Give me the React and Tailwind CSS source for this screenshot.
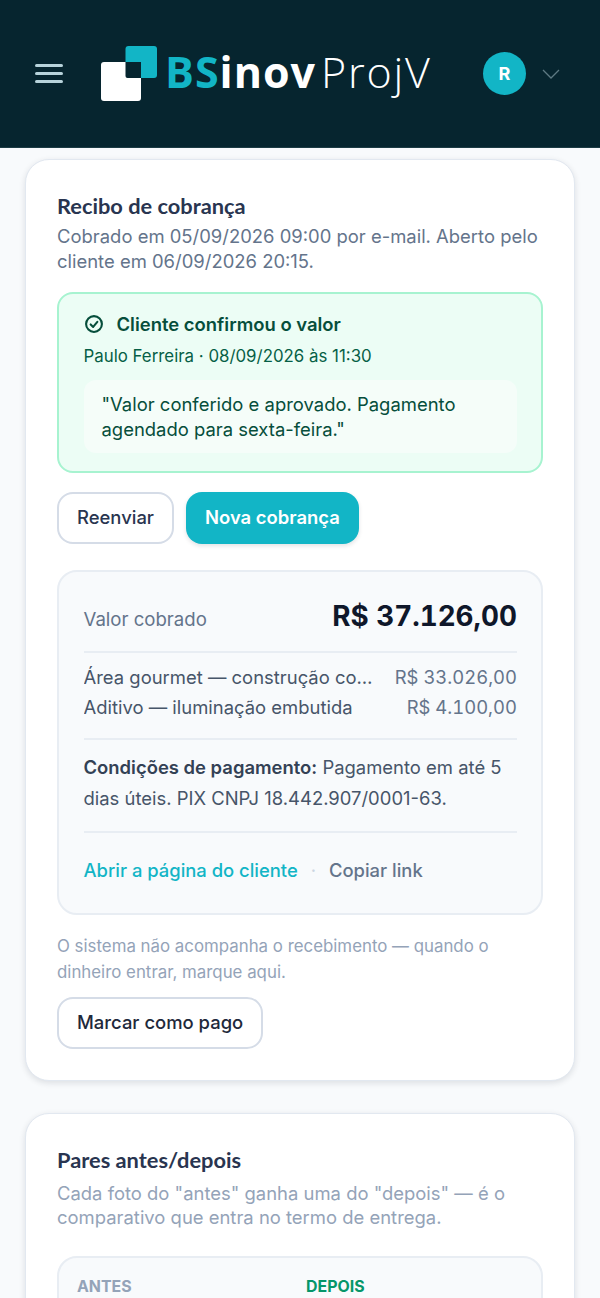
import React from "react";

const Inter = "font-['Inter',sans-serif]";

function Logo() {
  return (
    <div className="flex items-center">
      <svg width="56" height="55" viewBox="0 0 56 55" className="shrink-0">
        <rect x="24.5" y="0" width="31.5" height="32" rx="3" fill="#12b5c6" />
        <rect x="0" y="16" width="40" height="39" rx="3" fill="#ffffff" />
        <path d="M24.5 16 H40 V32 H26.5 a2 2 0 0 1 -2 -2 Z" fill="#06252f" />
      </svg>
      <div className="ml-[8px] -mt-[4px] flex items-baseline font-['Open_Sans',sans-serif] text-[43px] leading-none whitespace-nowrap">
        <span className="font-bold tracking-[1px] text-[#12b5c6]">BS</span>
        <span className="font-bold tracking-[1px] text-white">inov</span>
        <span className="ml-[5px] font-light tracking-[1.8px] text-white">ProjV</span>
      </div>
    </div>
  );
}

function Header() {
  return (
    <header className="flex h-[148px] items-center border-b border-[#1c3c45] bg-[#06252f] pl-[35px] pr-[40px]">
      <div className="flex w-[28px] flex-col gap-[5.5px]">
        <span className="h-[2.5px] w-full rounded-full bg-[#b7d3db]" />
        <span className="h-[2.5px] w-full rounded-full bg-[#b7d3db]" />
        <span className="h-[2.5px] w-full rounded-full bg-[#b7d3db]" />
      </div>
      <div className="ml-[38px]">
        <Logo />
      </div>
      <div className="ml-auto flex items-center gap-[16px]">
        <div className="flex h-[43px] w-[43px] items-center justify-center rounded-full bg-[#12b5c6] text-[18px] font-bold text-white">
          R
        </div>
        <svg width="18" height="10" viewBox="0 0 18 10" fill="none" stroke="#5d7a83" strokeWidth="1.3">
          <path d="M1 1 L9 9 L17 1" />
        </svg>
      </div>
    </header>
  );
}

function Card({ children }) {
  return (
    <section className="rounded-[24px] border border-[#e2e8f0] bg-white p-[31px] shadow-[0_2px_6px_rgba(15,23,42,0.12)]">
      {children}
    </section>
  );
}

export default function App() {
  return (
    <div className={`h-[1298px] overflow-hidden bg-[#f8fafc] ${Inter}`}>
      <Header />
      <main className="flex flex-col gap-[32px] px-[25px] pt-[11px]">
        <Card>
          <h2 className="font-['Lato',sans-serif] text-[21.8px] font-bold leading-[30px] text-[#293550]">Recibo de cobrança</h2>
          <p className="mt-[3px] text-[18.45px] leading-[24.5px] text-[#64748b]">
            Cobrado em 05/09/2026 09:00 por e-mail. Aberto pelo cliente em 06/09/2026 20:15.
          </p>

          <div className="mt-[19px] rounded-[16px] border-2 border-[#a7f3d0] bg-[#ecfdf5] px-[24.5px] pb-[18px] pt-[18px]">
            <div className="flex items-center gap-[13px]">
              <svg width="20" height="20" viewBox="0 0 24 24" fill="none" stroke="#064e3b" strokeWidth="2.5" strokeLinecap="round" strokeLinejoin="round">
                <circle cx="12" cy="12" r="9.5" />
                <path d="M8 12.5 L11 15.5 L16 9.5" />
              </svg>
              <span className="text-[18.45px] font-semibold leading-[24px] text-[#064e3b]">Cliente confirmou o valor</span>
            </div>
            <div className="mt-[8px] text-[16.85px] leading-[24px] text-[#065f46]">Paulo Ferreira · 08/09/2026 às 11:30</div>
            <div className="mt-[12px] rounded-[12px] bg-[#f5fdf9] px-[18px] py-[12px] text-[18.45px] leading-[24.5px] text-[#064e3b]">
              "Valor conferido e aprovado. Pagamento agendado para sexta-feira."
            </div>
          </div>

          <div className="mt-[19px] flex gap-[12px]">
            <button className="h-[52px] rounded-[16px] border-2 border-[#d5dce7] bg-white px-[18px] text-[18.45px] font-medium text-[#293550]">Reenviar</button>
            <button className="h-[52px] rounded-[16px] bg-[#12b5c6] px-[19px] text-[18.45px] font-semibold text-white shadow-[0_2px_4px_rgba(15,23,42,0.12)]">Nova cobrança</button>
          </div>

          <div className="mt-[26px] rounded-[20px] border-2 border-[#e8edf3] bg-[#f8fafc] pb-[29px] pl-[24.5px] pr-[24px] pt-[24px]">
            <div className="flex items-baseline justify-between border-b-2 border-[#e8edf3] pb-[15px]">
              <span className="text-[18.6px] leading-[27px] text-[#64748b]">Valor cobrado</span>
              <span className="text-[27.8px] font-bold leading-[40px] text-[#0f172a] tabular-nums">R$ 37.126,00</span>
            </div>
            <div className="border-b-2 border-[#e8edf3] pb-[16px] pt-[9px]">
              <div className="flex justify-between gap-[20px] text-[18.45px] leading-[30px]">
                <span className="truncate text-[#475569]">Área gourmet — construção completa</span>
                <span className="shrink-0 text-[#64748b] tabular-nums">R$ 33.026,00</span>
              </div>
              <div className="flex justify-between gap-[20px] text-[18.45px] leading-[30px]">
                <span className="truncate text-[#475569]">Aditivo — iluminação embutida</span>
                <span className="shrink-0 text-[#64748b] tabular-nums">R$ 4.100,00</span>
              </div>
            </div>
            <p className="border-b-2 border-[#e8edf3] pb-[17px] pt-[12px] text-[18.45px] leading-[31px] text-[#475569]">
              <strong className="font-semibold text-[#334155]">Condições de pagamento:</strong> Pagamento em até 5 dias úteis. PIX CNPJ 18.442.907/0001-63.
            </p>
            <div className="mt-[24px] flex items-center gap-[13px] text-[18.4px] leading-[27px]">
              <span className="font-medium text-[#12b5c6]">Abrir a página do cliente</span>
              <span className="text-[#cbd5e1]">·</span>
              <span className="font-medium text-[#64748b]">Copiar link</span>
            </div>
          </div>

          <p className="mt-[18px] text-[16.85px] leading-[26px] text-[#94a3b8]">
            O sistema não acompanha o recebimento — quando o dinheiro entrar, marque aqui.
          </p>
          <button className="mt-[12px] h-[52px] rounded-[16px] border-2 border-[#d5dce7] bg-white px-[18px] text-[18.45px] font-medium text-[#1e293b]">Marcar como pago</button>
        </Card>

        <Card>
          <h2 className="font-['Lato',sans-serif] text-[21.8px] font-bold leading-[30px] text-[#293550]">Pares antes/depois</h2>
          <p className="mt-[5.5px] text-[18.45px] leading-[24.5px] text-[#94a3b8]">
            Cada foto do "antes" ganha uma do "depois" — é o comparativo que entra no termo de entrega.
          </p>
          <div className="mt-[26px] rounded-[20px] border-2 border-[#e8edf3] bg-[#f8fafc] px-[18px] pb-[120px] pt-[18px]">
            <div className="grid grid-cols-2 gap-[12px] text-[15.9px] font-bold leading-[22px]">
              <span className="text-[#94a3b8]">ANTES</span>
              <span className="text-[#059669]">DEPOIS</span>
            </div>
          </div>
        </Card>
      </main>
    </div>
  );
}
